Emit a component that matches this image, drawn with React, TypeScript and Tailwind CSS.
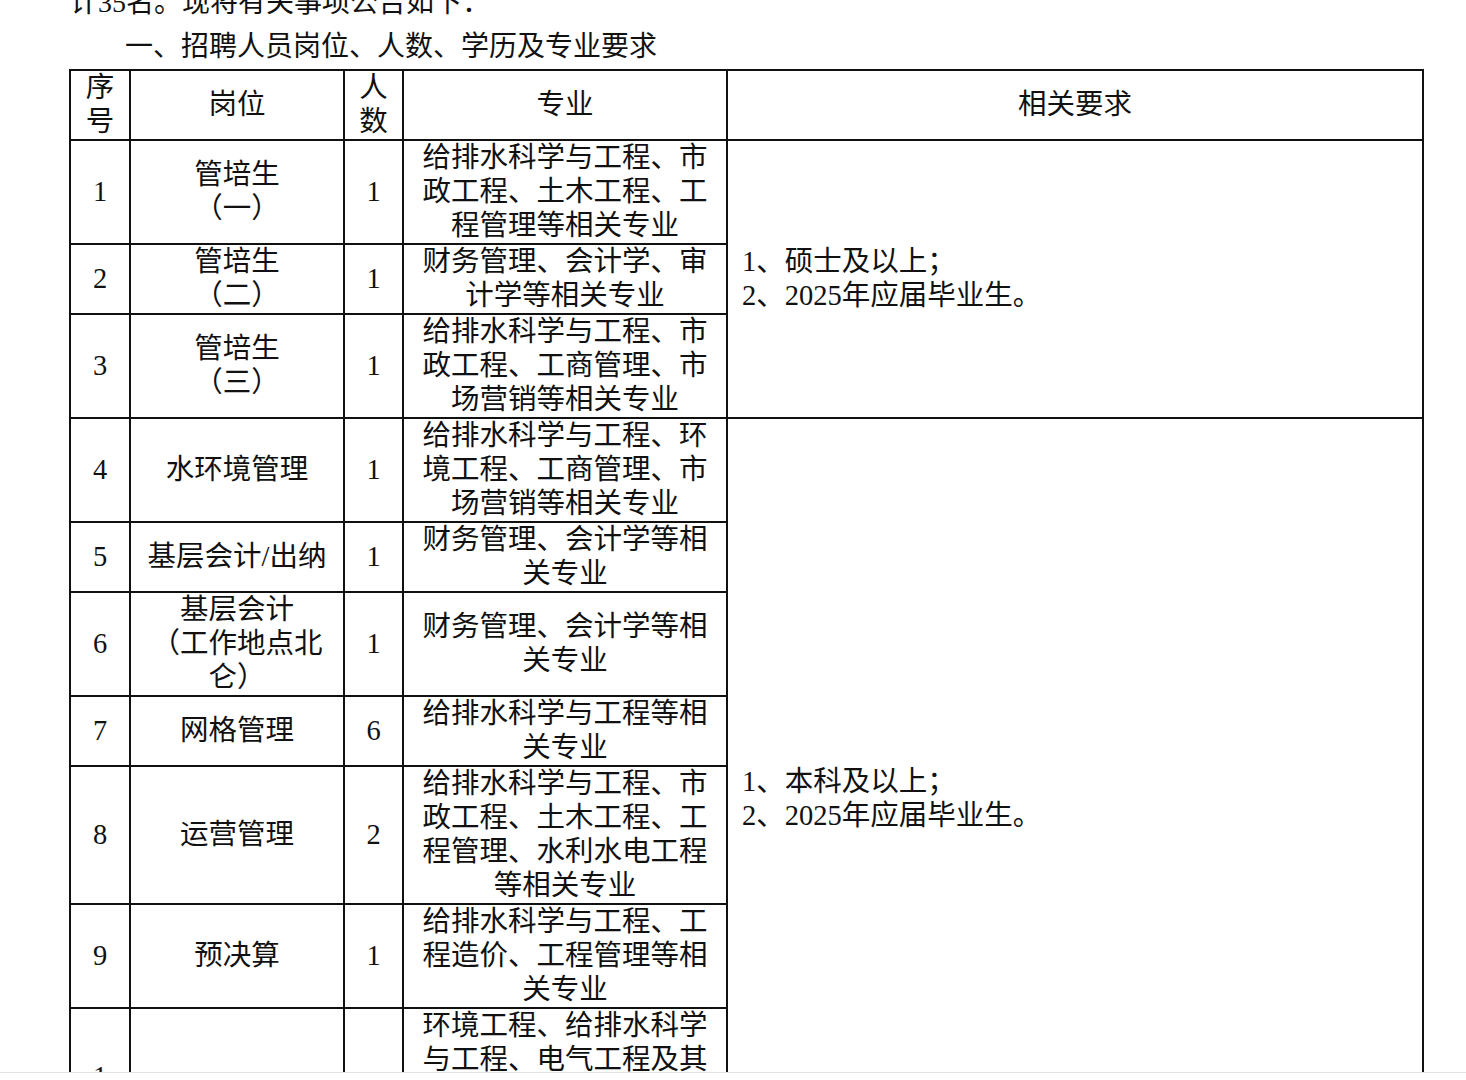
type Row = {
  no: string[];
  pos: string[];
  count: string;
  major: string[];
  tall?: boolean;
};

const rows: Row[] = [
  { no: ["1"], pos: ["管培生", "（一）"], count: "1", major: ["给排水科学与工程、市", "政工程、土木工程、工", "程管理等相关专业"] },
  { no: ["2"], pos: ["管培生", "（二）"], count: "1", major: ["财务管理、会计学、审", "计学等相关专业"] },
  { no: ["3"], pos: ["管培生", "（三）"], count: "1", major: ["给排水科学与工程、市", "政工程、工商管理、市", "场营销等相关专业"] },
  { no: ["4"], pos: ["水环境管理"], count: "1", major: ["给排水科学与工程、环", "境工程、工商管理、市", "场营销等相关专业"] },
  { no: ["5"], pos: ["基层会计/出纳"], count: "1", major: ["财务管理、会计学等相", "关专业"] },
  { no: ["6"], pos: ["基层会计", "（工作地点北", "仑）"], count: "1", major: ["财务管理、会计学等相", "关专业"] },
  { no: ["7"], pos: ["网格管理"], count: "6", major: ["给排水科学与工程等相", "关专业"] },
  { no: ["8"], pos: ["运营管理"], count: "2", major: ["给排水科学与工程、市", "政工程、土木工程、工", "程管理、水利水电工程", "等相关专业"] },
  { no: ["9"], pos: ["预决算"], count: "1", major: ["给排水科学与工程、工", "程造价、工程管理等相", "关专业"] },
  { no: ["1", "0"], pos: [], count: "", major: ["环境工程、给排水科学", "与工程、电气工程及其"], tall: true },
];

function Lines({ lines }: { lines: string[] }) {
  return (
    <>
      {lines.map((l, i) => (
        <div key={i}>{l}</div>
      ))}
    </>
  );
}

const cell = "border-2 border-[#111] p-0 align-middle text-center";

export default function App() {
  return (
    <div className="bg-white min-h-screen">
      <div className="h-[1073px] overflow-hidden border-b border-[#e2e2e2] bg-white pl-[70px] text-[#111] font-['Liberation_Serif','Noto_Sans_CJK_SC',serif]">
        <p className="-mt-[19px] text-[28px] leading-[44px]">计35名。现将有关事项公告如下：</p>
        <p className="pl-[55px] text-[28px] leading-[44px]">一、招聘人员岗位、人数、学历及专业要求</p>
        <table className="-ml-[1px] w-[1353px] table-fixed border-collapse text-[28.5px] leading-[34px]">
          <colgroup>
            <col className="w-[60px]" />
            <col className="w-[214px]" />
            <col className="w-[59px]" />
            <col className="w-[324px]" />
            <col className="w-[696px]" />
          </colgroup>
          <tbody>
            <tr>
              <td className={cell}>
                <Lines lines={["序", "号"]} />
              </td>
              <td className={cell}>岗位</td>
              <td className={cell}>
                <Lines lines={["人", "数"]} />
              </td>
              <td className={cell}>专业</td>
              <td className={cell}>相关要求</td>
            </tr>
            {rows.map((r, i) => (
              <tr key={i}>
                <td className={cell}>
                  <Lines lines={r.no} />
                </td>
                <td className={cell}>
                  <Lines lines={r.pos} />
                </td>
                <td className={cell}>{r.count}</td>
                <td className={cell}>
                  <div className={r.tall ? "h-[170px]" : ""}>
                    <Lines lines={r.major} />
                  </div>
                </td>
                {i === 0 && (
                  <td rowSpan={3} className={`${cell} !text-left pl-[14px]`}>
                    <div>1、硕士及以上；</div>
                    <div>2、2025年应届毕业生。</div>
                  </td>
                )}
                {i === 3 && (
                  <td rowSpan={7} className={`${cell} !text-left pl-[14px]`}>
                    <div>1、本科及以上；</div>
                    <div>2、2025年应届毕业生。</div>
                  </td>
                )}
              </tr>
            ))}
          </tbody>
        </table>
      </div>
    </div>
  );
}
